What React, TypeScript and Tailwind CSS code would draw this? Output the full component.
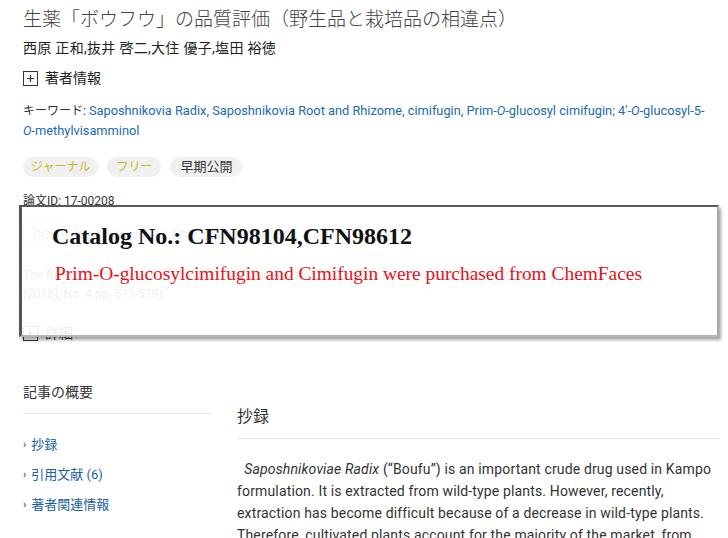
import React from 'react';

const PlusBox: React.FC<{ faint?: boolean }> = ({ faint }) => (
  <svg width="15" height="15" viewBox="0 0 15 15" className="shrink-0">
    <rect x="0.5" y="0.5" width="14" height="14" fill="none" stroke={faint ? '#999' : '#333'} />
    <path d="M4 7.5h7M7.5 4v7" stroke={faint ? '#999' : '#333'} strokeWidth="1.2" />
  </svg>
);

const keywords = (
  <>
    <span className="text-[#1a6bb3]">Saposhnikovia Radix</span>,{' '}
    <span className="text-[#1a6bb3]">Saposhnikovia Root and Rhizome</span>,{' '}
    <span className="text-[#1a6bb3]">cimifugin</span>,{' '}
    <span className="text-[#1a6bb3]">
      Prim-<i>O</i>-glucosyl cimifugin; 4′-<i>O</i>-glucosyl-5-<i>O</i>-methylvisamminol
    </span>
  </>
);

const App: React.FC = () => {
  return (
    <div
      className="relative w-[728px] h-[538px] overflow-hidden bg-white text-[#333]"
      style={{ fontFamily: 'Roboto, "Noto Sans CJK JP", sans-serif' }}
    >
      <div className="pl-[23px] pr-[8px] pt-[7px]">
        <h1 className="text-[19px] leading-[26px] font-light text-[#444] whitespace-nowrap">
          生薬「ボウフウ」の品質評価（野生品と栽培品の相違点）
        </h1>
        <p className="mt-[5px] text-[14px] leading-[20px] text-[#222] tracking-[0.3px]">
          西原 正和,抜井 啓二,大住 優子,塩田 裕徳
        </p>
        <div className="mt-[10px] flex items-center gap-[7px] text-[14px] leading-[20px] text-[#222]">
          <PlusBox />
          <span>著者情報</span>
        </div>
        <p className="mt-[13px] pr-[6px] text-[12.8px] leading-[20px] text-[#1a6bb3]">
          <span className="text-[#333] text-[12px]">キーワード: </span>
          {keywords}
        </p>
        <div className="mt-[16px] flex items-center gap-[9px] text-[12px]">
          <span className="rounded-full bg-[#f0f0f0] h-[20px] px-[8px] leading-[20px] text-[#c9b81c]">ジャーナル</span>
          <span className="rounded-full bg-[#f0f0f0] h-[20px] px-[9px] leading-[20px] text-[#c9b81c]">フリー</span>
          <span className="rounded-full bg-[#f0f0f0] h-[20px] px-[10px] leading-[20px] text-[#333] text-[13px]">早期公開</span>
        </div>
        <p className="mt-[15px] text-[12px] leading-[18px] text-[#333]">論文ID: 17-00208</p>
        <div className="mt-[12px] flex items-center gap-[10px] text-[12px]">
          <span className="border border-[#ccc] rounded-sm h-[25px] w-[40px] flex items-center justify-center text-[#777]">DOI</span>
          <span className="text-[#1a6bb3]">https://doi.org/10.1248/yakushi.17-00208</span>
        </div>
        <p className="mt-[19px] text-[12px] leading-[19px] text-[#555] whitespace-nowrap">
          The full-text of this article is available in Japanese only. To read the article, please click here (Vol. 138
          <br />
          (2018), No. 4 pp. 571-579).
        </p>
        <div className="mt-[19px] flex items-center gap-[7px] text-[14px] leading-[20px] text-[#333]">
          <PlusBox />
          <span>詳細</span>
        </div>

        <div className="mt-[39px] flex gap-[26px]">
          <aside className="w-[188px] shrink-0">
            <h2 className="text-[14px] leading-[20px] text-[#333]">記事の概要</h2>
            <hr className="mt-[11px] border-[#e6e6e6]" />
            <ul className="mt-[21px] flex flex-col gap-[10px] text-[13px] leading-[20px] text-[#1a5fa3]">
              {['抄録', '引用文献 (6)', '著者関連情報'].map((t) => (
                <li key={t} className="flex items-center gap-[5px]">
                  <span className="text-[#333] text-[11px]">›</span>
                  <span>{t}</span>
                </li>
              ))}
            </ul>
          </aside>
          <main className="flex-1">
            <h2 className="mt-[24px] text-[16px] leading-[22px] text-[#333]">抄録</h2>
            <hr className="mt-[10px] border-[#e6e6e6]" />
            <p className="mt-[19px] pr-[8px] text-[14px] leading-[22px] text-[#333] tracking-[0.15px]">
              &nbsp;&nbsp;<i>Saposhnikoviae Radix</i> (“Boufu”) is an important crude drug used in Kampo
              formulation. It is extracted from wild-type plants. However, recently, extraction has become
              difficult because of a decrease in wild-type plants. Therefore, cultivated plants account for the
              majority of the market, from which differences in quality between wild-type and cultivated plants
              have been pointed out.
            </p>
          </main>
        </div>
      </div>

      <div className="absolute left-[19px] top-[205px] w-[700px] h-[132px] bg-white/90 border-t-2 border-t-[#5a5a5a] border-l-[3px] border-l-[#555] border-r-2 border-r-[#a8a8a8] border-b-2 border-b-[#b5b5b5] shadow-[2px_3px_3px_rgba(0,0,0,0.35)]">
        <div className="pl-[30px] pt-[14px]" style={{ fontFamily: '"Liberation Serif", serif' }}>
          <p className="text-[24px] leading-[30px] font-bold text-[#111]">Catalog No.: CFN98104,CFN98612</p>
          <p className="mt-[12px] ml-[3px] text-[19.4px] leading-[22px] text-[#e3141b]">
            Prim-O-glucosylcimifugin and Cimifugin were purchased from ChemFaces
          </p>
        </div>
      </div>
    </div>
  );
};

export default App;
